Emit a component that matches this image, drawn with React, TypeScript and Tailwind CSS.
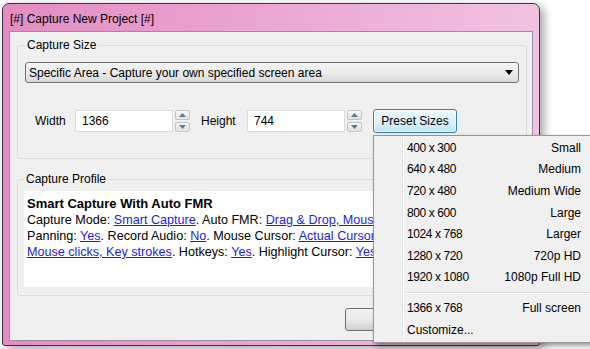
import React from 'react'

const sizes: [string, string][] = [
  ['400 x 300', 'Small'],
  ['640 x 480', 'Medium'],
  ['720 x 480', 'Medium Wide'],
  ['800 x 600', 'Large'],
  ['1024 x 768', 'Larger'],
  ['1280 x 720', '720p HD'],
  ['1920 x 1080', '1080p Full HD'],
]

function L({ children }: { children: React.ReactNode }) {
  return <span className="text-[#1c1ce6] underline">{children}</span>
}

function Spin() {
  return (
    <div className="flex flex-col gap-[2px] ml-[2px] w-[15px] h-[22px]">
      <div className="flex-1 flex items-center justify-center border border-[#c4c4c4] rounded-[2px] bg-gradient-to-b from-[#f7f7f7] to-[#e2e2e2]">
        <svg width="7" height="4" viewBox="0 0 7 4"><path d="M0 4 L3.5 0 L7 4 Z" fill="#5a7890" /></svg>
      </div>
      <div className="flex-1 flex items-center justify-center border border-[#c4c4c4] rounded-[2px] bg-gradient-to-b from-[#f7f7f7] to-[#e2e2e2]">
        <svg width="7" height="4" viewBox="0 0 7 4"><path d="M0 0 L3.5 4 L7 0 Z" fill="#5a7890" /></svg>
      </div>
    </div>
  )
}

export default function App() {
  return (
    <div className="relative w-[590px] h-[349px] bg-white overflow-hidden text-black" style={{ fontFamily: '"Liberation Sans", Arial, sans-serif' }}>
      {/* window */}
      <div className="ml-[2px] mt-[3px] w-[538px] h-[343px] flex flex-col border border-[#3b3340] rounded-t-[7px] rounded-b-[3px] bg-gradient-to-r from-[#e48cc2] via-[#eba6d4] to-[#f1c2e2] shadow-[4px_3px_10px_rgba(0,0,0,0.35)]">
        <div className="h-[27px] flex items-center pl-[7px] text-[12px] pt-[2px]">[#] Capture New Project [#]</div>
        <div className="mx-[6px] mb-[4px] flex-1 flex flex-col bg-[#f0f0f0] border border-[#9a8e98]">
          {/* capture size */}
          <fieldset className="ml-[7px] mr-[5px] mt-[5px] h-[122px] border border-[#d5dfe5] rounded-[3px] px-[7px]">
            <legend className="px-[2px] text-[12px] leading-[16px]">Capture Size</legend>
            <div className="mt-[9px] h-[21px] flex items-center justify-between pl-[3px] pr-[5px] border border-[#707070] rounded-[3px] bg-gradient-to-b from-[#f4f4f4] via-[#ebebeb] to-[#dadada] text-[12px]">
              <span>Specific Area - Capture your own specified screen area</span>
              <svg width="8" height="5" viewBox="0 0 8 5"><path d="M0 0 L8 0 L4 5 Z" fill="#000" /></svg>
            </div>
            <div className="mt-[26px] ml-[10px] flex items-center text-[12px]">
              <span className="w-[40px]">Width</span>
              <div className="w-[98px] h-[22px] bg-white border border-[#dcdcdc] flex items-center pl-[6px]">1366</div>
              <Spin />
              <span className="ml-[11px] w-[46px]">Height</span>
              <div className="w-[98px] h-[22px] bg-white border border-[#dcdcdc] flex items-center pl-[6px]">744</div>
              <Spin />
              <div className="ml-[11px] w-[84px] h-[24px] flex items-center justify-center border border-[#3c7fb1] rounded-[3px] bg-gradient-to-b from-[#ecf7fd] via-[#dcf0fb] to-[#bfe4f8] shadow-[inset_0_0_0_1px_rgba(255,255,255,0.7)]">
                Preset Sizes
              </div>
            </div>
          </fieldset>
          {/* capture profile */}
          <fieldset className="ml-[7px] mr-[5px] mt-[12px] h-[125px] border border-[#d5dfe5] rounded-[3px] px-[6px]">
            <legend className="px-[2px] text-[12px] leading-[16px]">Capture Profile</legend>
            <div className="mt-[4px] h-[96px] bg-white pl-[3px] pt-[5px] text-[12.6px] leading-[16px]">
              {/* text hidden under the open menu is clipped */}
              <div className="w-[346px] overflow-hidden whitespace-nowrap">
                <div className="font-bold text-[13px]">Smart Capture With Auto FMR</div>
                <div>Capture Mode: <L>Smart Capture</L>. Auto FMR: <L>Drag &amp; Drop, Mouse Wheel</L>.</div>
                <div>Panning: <L>Yes</L>. Record Audio: <L>No</L>. Mouse Cursor: <L>Actual Cursor</L>. Show Events:</div>
                <div><L>Mouse clicks, Key strokes</L>. Hotkeys: <L>Yes</L>. Highlight Cursor: <L>Yes</L>.</div>
              </div>
            </div>
          </fieldset>
          <div className="mt-[12px] flex justify-end gap-[7px] mr-[6px] text-[12px]">
            <div className="w-[87px] h-[23px] flex items-center justify-center border border-[#707070] rounded-[3px] bg-gradient-to-b from-[#f2f2f2] via-[#ebebeb] to-[#cfcfcf]">OK</div>
            <div className="w-[87px] h-[23px] flex items-center justify-center border border-[#707070] rounded-[3px] bg-gradient-to-b from-[#f2f2f2] via-[#ebebeb] to-[#cfcfcf]">Cancel</div>
          </div>
        </div>
      </div>

      {/* preset sizes menu */}
      <div className="absolute left-[373px] top-[135px] w-[222px] h-[208px] bg-[#f0f0f0] border border-[#979797] shadow-[3px_3px_5px_rgba(0,0,0,0.4)] flex text-[12px]">
        <div className="w-[29px] border-r border-[#e2e3e3] shadow-[1px_0_0_#ffffff]" />
        <div className="flex-1 flex flex-col pt-[1px] pl-[4px] pr-[13px]">
          {sizes.map(([s, n]) => (
            <div key={s} className="h-[21.6px] flex items-center justify-between">
              <span className="tracking-[-0.4px]">{s}</span>
              <span>{n}</span>
            </div>
          ))}
          <div className="h-[9px] flex items-center -ml-[4px] -mr-[13px] pl-[2px]">
            <div className="w-full h-[1px] bg-[#e0e0e0] shadow-[0_1px_0_#ffffff]" />
          </div>
          <div className="h-[21.6px] flex items-center justify-between">
            <span className="tracking-[-0.4px]">1366 x 768</span>
            <span>Full screen</span>
          </div>
          <div className="h-[21.6px] flex items-center">Customize...</div>
        </div>
      </div>
    </div>
  )
}
